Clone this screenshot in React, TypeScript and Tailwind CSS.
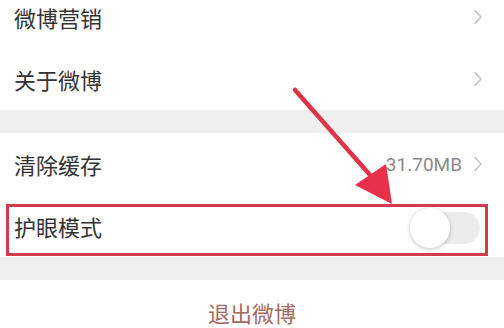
const font = { fontFamily: '"Noto Sans CJK SC", "Noto Sans", sans-serif' };

function Chevron() {
  return (
    <svg width="10" height="16" viewBox="0 0 10 16" className="shrink-0">
      <path d="M2 1.5 L8 8 L2 14.5" fill="none" stroke="#c4c4c4" strokeWidth="1.6" strokeLinecap="round" strokeLinejoin="round" />
    </svg>
  );
}

function Row({ label, right, children }: { label: string; right?: string; children?: React.ReactNode }) {
  return (
    <div className="h-[62px] bg-white flex items-center pl-[14px] pr-[21px]">
      <span className="text-[22px] text-[#333333] flex-1 leading-none">{label}</span>
      {children ?? (
        <div className="flex items-center gap-[11px]">
          {right && (
            <span className="text-[19px] text-[#8a8a8a] leading-none" style={{ fontFamily: 'Roboto, "Noto Sans", sans-serif' }}>
              {right}
            </span>
          )}
          <Chevron />
        </div>
      )}
    </div>
  );
}

export default function App() {
  return (
    <div className="relative w-[504px] h-[328px] overflow-hidden bg-[#efefef]" style={font}>
      <div className="-mt-[14px]">
        <Row label="微博营销" />
        <Row label="关于微博" />
        <div className="h-[23px]" />
        <Row label="清除缓存" right="31.70MB" />
        <Row label="护眼模式">
          <div className="relative w-[70px] h-[40px] mr-[3px] mt-[4px]">
            <div className="absolute left-[6px] right-0 top-[4px] bottom-[4px] rounded-full bg-[#ececec]" />
            <div className="absolute left-0 top-0 w-[40px] h-[40px] rounded-full bg-white shadow-[0_1px_4px_rgba(0,0,0,0.25)]" />
          </div>
        </Row>
        <div className="h-[23px]" />
        <div className="h-[64px] bg-white flex items-center justify-center">
          <span className="text-[22px] text-[#a26b5f] leading-none">退出微博</span>
        </div>
      </div>

      {/* annotation: red box */}
      <div className="absolute left-[6px] top-[204px] w-[482px] h-[52px] border-[3px] border-[#d43a4c]" />

      {/* annotation: arrow */}
      <svg className="absolute left-0 top-0" width="504" height="328" viewBox="0 0 504 328">
        <line x1="295" y1="90" x2="378" y2="184" stroke="#df3447" strokeWidth="4.5" strokeLinecap="round" />
        <polygon points="392,204 355,185 386,164" fill="#e8304a" />
      </svg>
    </div>
  );
}
